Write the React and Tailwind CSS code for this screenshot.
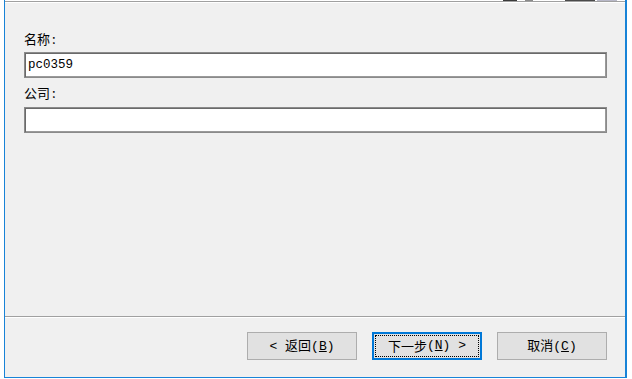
export default function App() {
  const cjk = { fontFamily: '"Noto Sans CJK SC", "Liberation Sans", sans-serif' };
  const mono = { fontFamily: '"Liberation Mono", monospace' };
  return (
    <div className="w-[632px] h-[379px] bg-white relative overflow-hidden" style={cjk}>
      <div className="absolute left-[4px] top-0 w-[623px] h-[378px] border-l border-r-2 border-b border-[#1883d7] bg-[#f0f0f0] flex flex-col">
        {/* header remnant */}
        <div className="h-[1px] bg-white relative">
          <div className="absolute left-[498px] top-0 w-[14px] h-[1px] bg-[#3a3a3a]" />
          <div className="absolute left-[520px] top-0 w-[8px] h-[1px] bg-[#8a8a8a]" />
          <div className="absolute left-[560px] top-0 w-[30px] h-[1px] bg-[#4a4a4a]" />
          <div className="absolute left-[592px] top-0 w-[20px] h-[1px] bg-[#b8b8c8]" />
        </div>
        <div className="h-[1px] bg-[#a0a0a0]" />
        <div className="h-[1px] bg-white" />
        <div className="flex-1 flex flex-col px-[19px] pt-[28px]">
          <div className="text-[13px] leading-[16px] text-black">名称<span className="ml-[2px]">:</span></div>
          <div className="mt-[5px] w-[583px] h-[26px] border border-[#8a8a8a] shadow-[inset_1px_1px_0_#6a6a6a,inset_-1px_-1px_0_#9a9a9a] bg-white flex items-center px-[3px]">
            <span className="text-[12.5px] text-black" style={mono}>pc0359</span>
          </div>
          <div className="mt-[7px] text-[13px] leading-[16px] text-black">公司<span className="ml-[2px]">:</span></div>
          <div className="mt-[6px] w-[583px] h-[26px] border border-[#8a8a8a] shadow-[inset_1px_1px_0_#6a6a6a,inset_-1px_-1px_0_#9a9a9a] bg-white" />
        </div>
        <div className="h-[1px] bg-[#a0a0a0]" />
        <div className="h-[1px] bg-white" />
        <div className="h-[59px] flex items-start justify-end gap-[15px] pr-[18px] pt-[14px]">
          <button className="w-[110px] h-[28px] bg-[#e1e1e1] border border-[#adadad] text-[13px] text-black flex items-center justify-center">
            <span><span style={mono}>&lt; </span>返回<span style={mono}>(<u>B</u>)</span></span>
          </button>
          <button className="w-[110px] h-[28px] bg-[#e1e1e1] border-2 border-[#0078d7] text-[13px] text-black flex items-center justify-center p-[1px]">
            <span className="w-full h-full border border-dotted border-black flex items-center justify-center">下一步<span style={mono}>(<u>N</u>) &gt;</span></span>
          </button>
          <button className="w-[110px] h-[28px] bg-[#e1e1e1] border border-[#adadad] text-[13px] text-black flex items-center justify-center">
            <span>取消<span style={mono}>(<u>C</u>)</span></span>
          </button>
        </div>
      </div>
    </div>
  );
}
